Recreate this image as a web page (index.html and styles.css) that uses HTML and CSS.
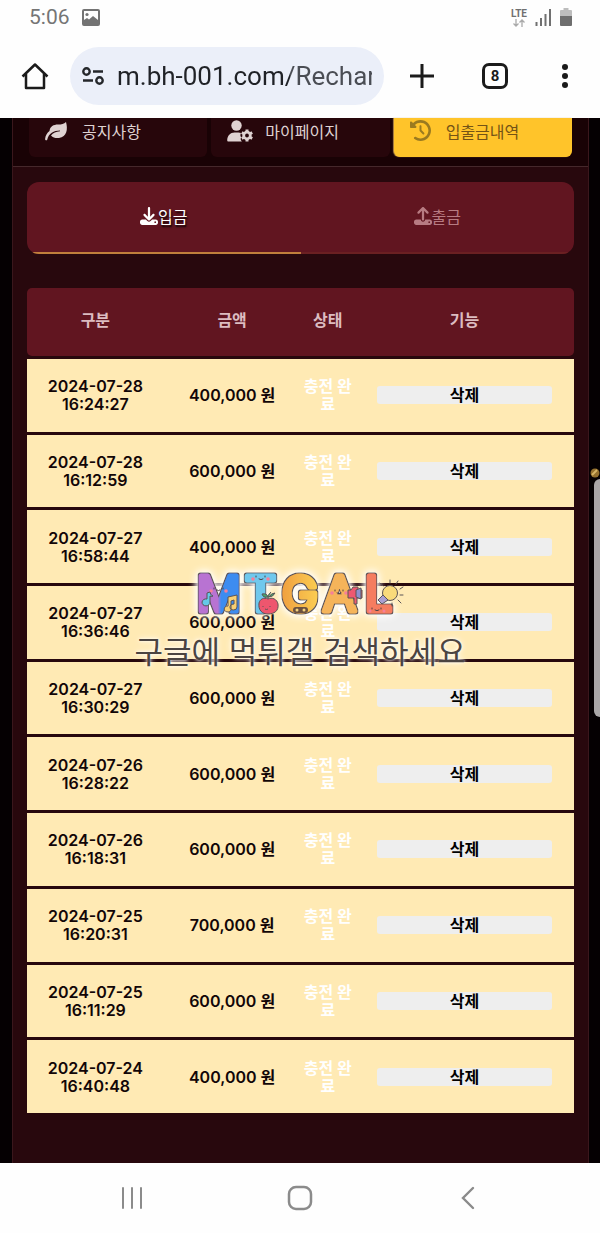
FILE: index.html
```html
<!DOCTYPE html>
<html lang="ko">
<head>
  <meta charset="UTF-8" />
  <title>입출금내역</title>
  <meta name="viewport" content="width=device-width, initial-scale=1.0" />
  <link rel="stylesheet" href="styles.css">
</head>
<body>

  <!-- Phone status bar + browser bar -->
  <header class="browser">
    <div class="status-bar">
      <span class="clock">5:06</span>
      <svg class="picture" width="18" height="17" viewBox="0 0 18 17" fill="none" stroke="#737373" stroke-width="2">
        <rect x="1" y="1" width="16" height="15" rx="1"/>
        <circle cx="5" cy="5.5" r="1.6" fill="#737373" stroke="none"/>
        <path d="M2 15v-4l3-2 2 1.500 4-3.500 5 4v4z" fill="#737373" stroke="none"/>
      </svg>
      <span class="lte">LTE<svg width="12" height="8" viewBox="0 0 12 8" fill="none" stroke="#aaa" stroke-width="1.300"><path d="M3 0v6.500M.5 4.500 3 7l2.500-2.500M9 8V1.500M6.500 3.500 9 1l2.500 2.500"/></svg></span>
      <svg width="17" height="17" viewBox="0 0 17 17" stroke="#707070" stroke-width="2"><path d="M1.500 17v-4M6 17V9M10.500 17V5M15 17V0"/></svg>
      <svg width="12" height="18" viewBox="0 0 12 18"><path d="M3.500 0h5v2H11a1 1 0 0 1 1 1v5H0V3a1 1 0 0 1 1-1h2.500z" fill="#bdbdbd"/><path d="M0 8h12v9a1 1 0 0 1-1 1H1a1 1 0 0 1-1-1z" fill="#6e6e6e"/></svg>
    </div>
    <div class="toolbar">
      <button class="tool" aria-label="홈">
        <svg width="28" height="28" viewBox="0 0 28 28" fill="none" stroke="#1b1b1b" stroke-width="2.500" stroke-linejoin="round"><path d="M1.500 14.500 14 2.500l12.500 12M5 12v14h18V12"/></svg>
      </button>
      <div class="address">
        <svg width="22" height="18" viewBox="0 0 22 18" fill="none" stroke="#25272b" stroke-width="2.400"><circle cx="4.500" cy="4.500" r="3.200"/><path d="M11 4.500h10M1 13.500h10"/><circle cx="17.500" cy="13.500" r="3.200"/></svg>
        <input class="url" type="text" aria-label="주소" value="m.bh-001.com/Recharge">
      </div>
      <button class="tool" aria-label="새 탭">
        <svg width="24" height="24" viewBox="0 0 24 24" stroke="#1b1b1b" stroke-width="3"><path d="M12 0v24M0 12h24"/></svg>
      </button>
      <button class="tool" aria-label="탭 8개"><span class="tab-count">8</span></button>
      <button class="tool more" aria-label="메뉴">
        <svg width="6" height="24" viewBox="0 0 6 24" fill="#1b1b1b"><circle cx="3" cy="3" r="3"/><circle cx="3" cy="12" r="3"/><circle cx="3" cy="21" r="3"/></svg>
      </button>
    </div>
  </header>

  <main class="page">
    <nav class="menu">
      <a class="menu-item" href="#notice">
        <svg width="23" height="20" viewBox="0 0 23 20" fill="currentColor"><path d="M21 1c2 7 1 15-7 16-3 .4-6-.2-8-2.500 2-2.500 5-4 9-4.300v-.7C9 9.500 3.500 12.500 2.300 18.500c-.3 1.300-2.300 1-2.200-.4C.4 14.500 2 12 4.500 10 5 5.500 8.500 3.500 13 3.500c3.500 0 6-.5 8-2.500z"/></svg>
        <span>공지사항</span>
      </a>
      <a class="menu-item" href="#mypage">
        <svg width="26" height="22" viewBox="0 0 26 22" fill="currentColor">
          <circle cx="9.500" cy="5.500" r="5.200"/>
          <path d="M7.500 12.500h4c1 0 1.800.2 2.500.5-1 2-.6 3.200.2 4.200-1 1.600-.5 2.900.7 4.300H1.500c-.8 0-1.300-.5-1.300-1.300 0-4.300 3.200-7.700 7.300-7.700z"/>
          <circle cx="20" cy="15.500" r="3.300" fill="none" stroke="currentColor" stroke-width="2.800"/>
          <path d="M20 9.500v2.500M20 19v2.500M14.800 12.500l2.200 1.200M23 17.300l2.200 1.200M14.800 18.500l2.200-1.200M23 13.700l2.200-1.200" stroke="currentColor" stroke-width="3"/>
        </svg>
        <span>마이페이지</span>
      </a>
      <a class="menu-item active" href="#history">
        <svg width="21" height="21" viewBox="0 0 512 512" fill="currentColor"><path d="M75 75L41 41C25.900 25.900 0 36.600 0 57.900V168c0 13.300 10.700 24 24 24H134.100c21.400 0 32.100-25.900 17-41l-30.800-30.800C155 85.500 203 64 256 64c106 0 192 86 192 192s-86 192-192 192c-40.800 0-78.600-12.700-109.700-34.400c-14.500-10.100-34.400-6.600-44.600 7.900s-6.600 34.400 7.900 44.600C151.200 495 201.700 512 256 512c141.400 0 256-114.600 256-256S397.400 0 256 0C185.300 0 121.300 28.700 75 75zm181 53c-13.300 0-24 10.700-24 24V256c0 6.400 2.500 12.500 7 17l72 72c9.400 9.400 24.600 9.400 33.900 0s9.400-24.600 0-33.900l-65-65V152c0-13.300-10.700-24-24-24z"/></svg>
        <span>입출금내역</span>
      </a>
    </nav>

    <div class="content">
      <div class="tabs">
        <button class="tab active">
          <svg width="18" height="18" viewBox="0 0 512 512" fill="currentColor"><path d="M288 32c0-17.700-14.300-32-32-32s-32 14.300-32 32V274.700l-73.400-73.400c-12.500-12.500-32.800-12.500-45.300 0s-12.500 32.800 0 45.300l128 128c12.500 12.500 32.800 12.500 45.300 0l128-128c12.500-12.500 12.500-32.800 0-45.300s-32.800-12.500-45.300 0L288 274.700V32zM64 352c-35.300 0-64 28.700-64 64v32c0 35.300 28.700 64 64 64H448c35.300 0 64-28.700 64-64V416c0-35.300-28.700-64-64-64H346.500l-45.300 45.300c-25 25-65.500 25-90.500 0L165.500 352H64zm368 56a24 24 0 1 1 0 48 24 24 0 1 1 0-48z"/></svg>입금
        </button>
        <button class="tab">
          <svg width="18" height="18" viewBox="0 0 512 512" fill="currentColor"><path d="M288 109.300V352c0 17.700-14.300 32-32 32s-32-14.300-32-32V109.300l-73.400 73.400c-12.500 12.500-32.800 12.500-45.300 0s-12.500-32.800 0-45.300l128-128c12.500-12.500 32.800-12.500 45.300 0l128 128c12.500 12.500 12.500 32.800 0 45.300s-32.800 12.500-45.300 0L288 109.300zM64 352H192c0 35.300 28.700 64 64 64s64-28.700 64-64H448c35.300 0 64 28.700 64 64v32c0 35.300-28.700 64-64 64H64c-35.300 0-64-28.700-64-64V416c0-35.300 28.700-64 64-64zM432 456a24 24 0 1 0 0-48 24 24 0 1 0 0 48z"/></svg>출금
        </button>
      </div>

      <div class="table-wrap">
        <table class="history">
          <thead>
            <tr><th class="wide">구분</th><th class="wide">금액</th><th class="narrow">상태</th><th>기능</th></tr>
          </thead>
          <tbody>
            <tr><td>2024-07-28<br>16:24:27</td><td>400,000 원</td><td class="state">충전 완료</td><td class="action"><button class="delete">삭제</button></td></tr>
            <tr><td>2024-07-28<br>16:12:59</td><td>600,000 원</td><td class="state">충전 완료</td><td class="action"><button class="delete">삭제</button></td></tr>
            <tr><td>2024-07-27<br>16:58:44</td><td>400,000 원</td><td class="state">충전 완료</td><td class="action"><button class="delete">삭제</button></td></tr>
            <tr><td>2024-07-27<br>16:36:46</td><td>600,000 원</td><td class="state">충전 완료</td><td class="action"><button class="delete">삭제</button></td></tr>
            <tr><td>2024-07-27<br>16:30:29</td><td>600,000 원</td><td class="state">충전 완료</td><td class="action"><button class="delete">삭제</button></td></tr>
            <tr><td>2024-07-26<br>16:28:22</td><td>600,000 원</td><td class="state">충전 완료</td><td class="action"><button class="delete">삭제</button></td></tr>
            <tr><td>2024-07-26<br>16:18:31</td><td>600,000 원</td><td class="state">충전 완료</td><td class="action"><button class="delete">삭제</button></td></tr>
            <tr><td>2024-07-25<br>16:20:31</td><td>700,000 원</td><td class="state">충전 완료</td><td class="action"><button class="delete">삭제</button></td></tr>
            <tr><td>2024-07-25<br>16:11:29</td><td>600,000 원</td><td class="state">충전 완료</td><td class="action"><button class="delete">삭제</button></td></tr>
            <tr><td>2024-07-24<br>16:40:48</td><td>400,000 원</td><td class="state">충전 완료</td><td class="action"><button class="delete">삭제</button></td></tr>
          </tbody>
        </table>
      </div>
    </div>
  </main>

  <!-- Watermark -->
  <div class="watermark">
    <svg class="logo" width="230" height="64" viewBox="0 0 230 64">
      <defs>
        <linearGradient id="m" x1="0" x2="1"><stop offset=".48" stop-color="#b873d2"/><stop offset=".56" stop-color="#3c8cf0"/></linearGradient>
        <linearGradient id="g" x1="0" x2="1"><stop offset="0" stop-color="#f0a040"/><stop offset="1" stop-color="#fbcd52"/></linearGradient>
        <filter id="outline" x="-10%" y="-30%" width="120%" height="160%">
          <feMorphology in="SourceAlpha" operator="dilate" radius="1" result="fat"/>
          <feFlood flood-color="#5b5457"/>
          <feComposite in2="fat" operator="in" result="edge"/>
          <feGaussianBlur in="fat" stdDeviation="4" result="soft"/>
          <feFlood flood-color="#fff"/>
          <feComposite in2="soft" operator="in" result="glow"/>
          <feMerge><feMergeNode in="glow"/><feMergeNode in="glow"/><feMergeNode in="edge"/><feMergeNode in="SourceGraphic"/></feMerge>
        </filter>
      </defs>
      <g class="letters" filter="url(#outline)">
        <text x="12" y="48" fill="url(#m)" stroke="url(#m)">M</text>
        <text x="60" y="48" fill="#70c8ed" stroke="#70c8ed">T</text>
        <text x="97" y="48" fill="url(#g)" stroke="url(#g)">G</text>
        <text x="138" y="48" fill="#f5b45a" stroke="#f5b45a">A</text>
        <text x="180" y="48" fill="#f57d60" stroke="#f57d60">L</text>
      </g>
      <!-- faces -->
      <g fill="none" stroke="#4c4246" stroke-linecap="round">
        <path d="M29 25v1M38 25v1M32 27q1.500 1.500 3 0M71 13v1M80 13v1M74 16q2 1.500 4 0M150 27v1M158 27v1M152 30q2 1.500 4 0M187 45v1M196 45v1M190 47q2 1.500 4 0"/>
      </g>
      <g fill="#f67f9a"><circle cx="26" cy="28" r="1.800"/><circle cx="41" cy="28" r="1.800"/><circle cx="68" cy="16" r="1.800"/><circle cx="83" cy="16" r="1.800"/><circle cx="147" cy="30" r="1.800"/><circle cx="161" cy="30" r="1.800"/><circle cx="185" cy="48" r="1.500"/><circle cx="199" cy="48" r="1.500"/></g>
      <!-- music notes -->
      <g stroke="#5b5457" stroke-width="1">
        <path d="M22 36v-6l3-1q0 3 3 4-1 1-3 0v6a4 3.500 0 1 1-3-3z" fill="#65c9e8"/>
        <path d="M43 43V34l9-2v12a3.500 3 0 1 1-3-3v-4l-3 1v7a3.500 3 0 1 1-3-2z" fill="#f8cf73"/>
      </g>
      <!-- apple -->
      <g stroke="#5b5457" stroke-width="1">
        <path d="M83 36c-4-2-8 0-9 4-1 7 3 11 9 11s11-3 10-10c-1-5-6-7-10-5z" fill="#ee566e"/>
        <path d="M83 36q-1-4 3-7M83 34q-5 1-6-3 5-1 6 3zM84 34q4 0 6-4-4 0-6 4" fill="#46a86d"/>
        <path d="M78 43v1M85 43v1M80 46q1.500 1 3 0" fill="none"/>
      </g>
      <!-- game pad -->
      <g><rect x="108" y="44" width="15" height="6" rx="3" fill="#6c5140"/><circle cx="112" cy="47" r="1.500" fill="#f4d27d"/><circle cx="119" cy="47" r="1.500" fill="#f4d27d"/></g>
      <!-- camera -->
      <g stroke="#5b5457"><path d="M163 27h3l2-3h5v3h4v8h-5v6h-3v-6h-6z" fill="#ee5971"/><path d="M171 27l5-2v11l-5-2z" fill="#8f91cf"/></g>
      <!-- sun and bulb -->
      <g stroke="#5b5457"><circle cx="205" cy="30" r="7.500" fill="#fadb7a"/><path d="M198 32l-5 5 4 4 6-4z" fill="#aaa0d2"/><path d="M205 20v-3M211 21l2-3M215 26l3-2M215 32h3M213 37l3 3M207 40v3M198 23l-3-3" fill="none" stroke-linecap="round"/></g>
    </svg>
    <p class="slogan">구글에 먹튀갤 검색하세요</p>
  </div>
  <svg class="coin" width="10" height="10" viewBox="0 0 10 10"><circle cx="5" cy="5" r="4.500" fill="#94702e"/><path d="M2 7l5-5" stroke="#d6b566" stroke-width="2"/></svg>
  <div class="scroll-thumb"></div>

  <footer class="phone-nav">
    <button aria-label="최근 앱"><svg width="22" height="24" viewBox="0 0 22 24" stroke="#8b8b8b" stroke-width="2" stroke-linecap="round"><path d="M2 2v20M11 2v20M20 2v20"/></svg></button>
    <button aria-label="홈 화면"><svg width="26" height="26" viewBox="0 0 26 26" fill="none" stroke="#8b8b8b" stroke-width="2.500"><rect x="2" y="2" width="22" height="22" rx="7"/></svg></button>
    <button aria-label="뒤로"><svg width="14" height="24" viewBox="0 0 14 24" fill="none" stroke="#8b8b8b" stroke-width="2.400" stroke-linecap="round"><path d="M12 2 2 12l10 10"/></svg></button>
  </footer>
</body>
</html>
```

FILE: styles.css
```css
* {
  box-sizing: border-box;
}
body {
  position: relative;
  display: flex;
  flex-direction: column;
  min-height: 100vh;
  margin: 0;
  background: #050002;
  font-family: Inter, "Noto Sans CJK KR", sans-serif;
  font-size: 16px;
  overflow-x: hidden;
}
button {
  padding: 0;
  border: none;
  background: none;
  font: inherit;
  cursor: pointer;
}
svg {
  display: block;
  flex: none;
}

/* browser bar */
.browser {
  background: #fefefe;
  height: 118px;
  font-family: Roboto, sans-serif;
}
.status-bar {
  display: flex;
  align-items: center;
  gap: 8px;
  height: 34px;
  padding: 0 28px 0 29px;
}
.clock {
  color: #757575;
  font-size: 21px;
}
.picture {
  margin-left: 4px;
  margin-right: auto;
}
.lte {
  display: flex;
  flex-direction: column;
  align-items: center;
  color: #707070;
  font-size: 10px;
  font-weight: 700;
  line-height: 11px;
}
.toolbar {
  display: flex;
  align-items: center;
  height: 84px;
  padding-left: 21px;
}
.tool {
  display: flex;
  align-items: center;
  justify-content: center;
  width: 70px;
  height: 56px;
}
.tool:first-child {
  width: 28px;
  margin-right: 21px;
}
.address {
  display: flex;
  flex: 1;
  align-items: center;
  gap: 13px;
  min-width: 0;
  height: 58px;
  padding: 0 12px;
  border-radius: 29px;
  background: #ebeff9;
}
.address + .tool {
  width: 76px;
}
.url {
  flex: 1;
  min-width: 0;
  padding: 0;
  border: none;
  outline: none;
  background: linear-gradient(90deg, #202227 68%, #4a4d54 68%);
  -webkit-background-clip: text;
  background-clip: text;
  -webkit-text-fill-color: transparent;
  font: 26px Roboto, sans-serif;
}
.tab-count {
  width: 26px;
  height: 26px;
  border: 3px solid #1b1b1b;
  border-radius: 7px;
  color: #1b1b1b;
  font-size: 15px;
  font-weight: 700;
  line-height: 20px;
}

/* site */
.page {
  display: flex;
  flex: 1;
  flex-direction: column;
  margin: 0 11px 0 12px;
  border: solid #3a171c;
  border-width: 0 1px;
  background: #28080d;
}
.menu {
  display: grid;
  grid-template-columns: repeat(3, 1fr);
  gap: 4px;
  padding: 0 16px 9px;
  border-bottom: 1px solid #45282b;
  background: #190205;
}
.menu-item {
  display: flex;
  align-items: center;
  gap: 12px;
  height: 39px;
  padding: 0 16px 14px;
  border-radius: 0 0 6px 6px;
  background: #27060b;
  color: #dfd2d2;
  text-decoration: none;
}
.menu-item:first-child {
  gap: 14px;
}
.menu-item.active {
  gap: 15px;
  background: #ffc42a;
  box-shadow: -1px 0 1px #b48a48;
  color: #735316;
}
.menu-item.active svg {
  color: #9a7a20;
}
.content {
  display: flex;
  flex: 1;
  flex-direction: column;
  gap: 31px;
  padding: 15px 14px 47px;
}
.tabs {
  display: flex;
  overflow: hidden;
  border-radius: 12px;
  background: #611520;
}
.tab {
  display: flex;
  flex: 1;
  align-items: center;
  justify-content: center;
  height: 72px;
  padding-bottom: 2px;
  border-bottom: 2px solid #6b2022;
  color: #b77b82;
}
.tab.active {
  border-bottom-color: #c17f3c;
  color: #fff;
  text-shadow: 1px 2px 2px #000;
}
.table-wrap {
  display: flex;
  flex: 1;
}
.history {
  width: 100%;
  border-collapse: separate;
  border-spacing: 0 3px;
  table-layout: fixed;
  text-align: center;
}
.wide {
  width: 25%;
}
.narrow {
  width: 10%;
}
.history th {
  height: 68px;
  padding: 0 0 6px;
  background: #611520;
  color: #dcbcc0;
  font-weight: 700;
}
.history th:first-child {
  border-radius: 5px 0 0 5px;
}
.history th:last-child {
  border-radius: 0 5px 5px 0;
}
.history td {
  height: 72px;
  padding: 0 2px;
  background: #ffeab4;
  color: #120607;
  font-weight: 600;
  line-height: 18px;
}
.history .state {
  color: #fff;
  font-weight: 700;
  word-break: break-all;
}
.history .action {
  padding: 0 22px;
}
.delete {
  display: block;
  width: 100%;
  border-radius: 3px;
  background: #eee;
  color: #000;
  font-weight: 700;
  line-height: 18px;
}

/* watermark and scroll thumb lie over the page */
.watermark {
  position: absolute;
  top: 563px;
  left: 0;
  width: 100%;
  display: flex;
  flex-direction: column;
  align-items: center;
  pointer-events: none;
}
.letters {
  font-family: Inter, sans-serif;
  font-size: 48px;
  font-weight: 400;
  stroke-width: 5px;
  stroke-linejoin: round;
}
.slogan {
  margin: 0;
  color: #4b4441;
  font-size: 31px;
  font-weight: 400;
  line-height: 50px;
  text-shadow: 0 0 3px #fff, 0 0 6px #fff;
  white-space: nowrap;
}
.coin {
  position: absolute;
  top: 468px;
  right: 0;
}
.scroll-thumb {
  position: absolute;
  top: 479px;
  right: 0;
  width: 6px;
  height: 238px;
  border-radius: 6px 0 0 6px;
  background: #aaa6a7;
}

/* phone navigation */
.phone-nav {
  display: grid;
  grid-template-columns: repeat(3, 1fr);
  height: 70px;
  padding: 0 48px;
  background: #fefefe;
}
.phone-nav button {
  display: flex;
  align-items: center;
  justify-content: center;
}
```
